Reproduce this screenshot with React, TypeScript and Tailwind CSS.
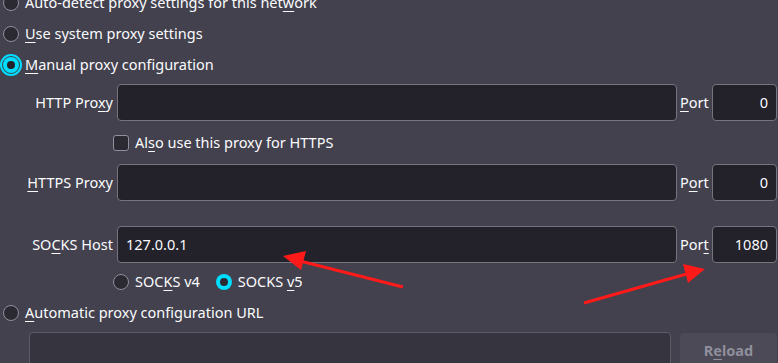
import React from 'react';

const font = { fontFamily: '"Noto Sans", "Open Sans", sans-serif' };

function Radio({ checked = false }: { checked?: boolean }) {
  if (checked) {
    return (
      <span className="flex h-[16px] w-[16px] shrink-0 items-center justify-center rounded-full bg-[#00ddff]">
        <span className="h-[8px] w-[8px] rounded-full bg-[#23222b]" />
      </span>
    );
  }
  return <span className="h-[16px] w-[16px] shrink-0 rounded-full border border-[#8f8f9d] bg-[#2b2a33]" />;
}

function U({ children }: { children: React.ReactNode }) {
  return <span className="underline decoration-1 underline-offset-[3px]">{children}</span>;
}

function Field({ value = '', right = false }: { value?: string; right?: boolean }) {
  return (
    <div
      className={`flex h-[37px] items-center rounded-[4px] border border-[#76757f] bg-[#23222b] px-[8px] text-[#fbfbfe] ${
        right ? 'justify-end' : ''
      }`}
    >
      {value}
    </div>
  );
}

function ProxyRow({ label, value, port }: { label: React.ReactNode; value?: string; port: React.ReactNode }) {
  return (
    <div className="flex items-center">
      <div className="w-[113px] shrink-0 text-right">{label}</div>
      <div className="ml-[4px] flex-1">
        <Field value={value} />
      </div>
      <div className="ml-[3px] w-[32px] shrink-0">{port}</div>
      <div className="w-[65px] shrink-0">
        <Field value={value === '127.0.0.1' ? '1080' : '0'} right />
      </div>
    </div>
  );
}

export default function App() {
  return (
    <div
      className="relative h-[363px] w-[778px] overflow-hidden bg-[#42414d] pr-[1px] text-[14.5px] text-[#fbfbfe]"
      style={font}
    >
      <div className="-mt-[13px] flex flex-col">
        <div className="flex h-[31px] items-center gap-[6px] pl-[3px]">
          <Radio />
          <span>
            Auto-detect proxy settings for this net<U>w</U>ork
          </span>
        </div>
        <div className="flex h-[31px] items-center gap-[6px] pl-[3px]">
          <Radio />
          <span>
            <U>U</U>se system proxy settings
          </span>
        </div>
        <div className="flex h-[31px] items-center gap-[6px] pl-[3px]">
          <span className="-ml-[3px] -mr-[3px] flex h-[22px] w-[22px] items-center justify-center rounded-full border-2 border-[#00ddff]">
            <Radio checked />
          </span>
          <span>
            <U>M</U>anual proxy configuration
          </span>
        </div>

        <div className="mt-[4px]">
          <ProxyRow
            label={
              <>
                HTTP Pro<U>x</U>y
              </>
            }
            port={
              <>
                <U>P</U>ort
              </>
            }
          />
        </div>

        <div className="flex h-[43px] items-center gap-[6px] pl-[113px]">
          <span className="h-[16px] w-[16px] rounded-[3px] border border-[#8f8f9d] bg-[#2b2a33]" />
          <span>
            Al<U>s</U>o use this proxy for HTTPS
          </span>
        </div>

        <ProxyRow
          label={
            <>
              <U>H</U>TTPS Proxy
            </>
          }
          port={
            <>
              P<U>o</U>rt
            </>
          }
        />

        <div className="mt-[25px]">
          <ProxyRow
            label={
              <>
                SO<U>C</U>KS Host
              </>
            }
            value="127.0.0.1"
            port={
              <>
                Por<U>t</U>
              </>
            }
          />
        </div>

        <div className="flex h-[38px] items-center pl-[113px]">
          <Radio />
          <span className="ml-[6px]">
            SOC<U>K</U>S v4
          </span>
          <span className="ml-[16px] flex h-[16px] w-[16px] items-center justify-center rounded-full bg-[#00ddff]">
            <span className="h-[8px] w-[8px] rounded-full bg-[#2b2a33]" />
          </span>
          <span className="ml-[6px]">
            SOCKS <U>v</U>5
          </span>
        </div>

        <div className="flex h-[24px] items-center gap-[6px] pl-[3px]">
          <Radio />
          <span>
            <U>A</U>utomatic proxy configuration URL
          </span>
        </div>

        <div className="mt-[7px] flex items-start">
          <div className="ml-[29px] h-[40px] w-[642px] rounded-[4px] border border-[#5b5a65] bg-[#35343f]" />
          <div className="ml-[9px] mt-[1px] flex h-[40px] flex-1 items-center justify-center rounded-[4px] bg-[#4b4a56] pb-[4px] font-bold text-[#8f8f9d]">
            R<U>e</U>load
          </div>
        </div>
      </div>

      <svg className="pointer-events-none absolute left-0 top-0" width="778" height="363">
        <line x1="403" y1="287" x2="300" y2="261" stroke="#ff1a1a" strokeWidth="3" />
        <polygon points="283,256 306,251 301,270" fill="#ff1a1a" />
        <line x1="584" y1="303" x2="690" y2="273" stroke="#ff1a1a" strokeWidth="3" />
        <polygon points="705,269 683,264 688,283" fill="#ff1a1a" />
      </svg>
    </div>
  );
}
